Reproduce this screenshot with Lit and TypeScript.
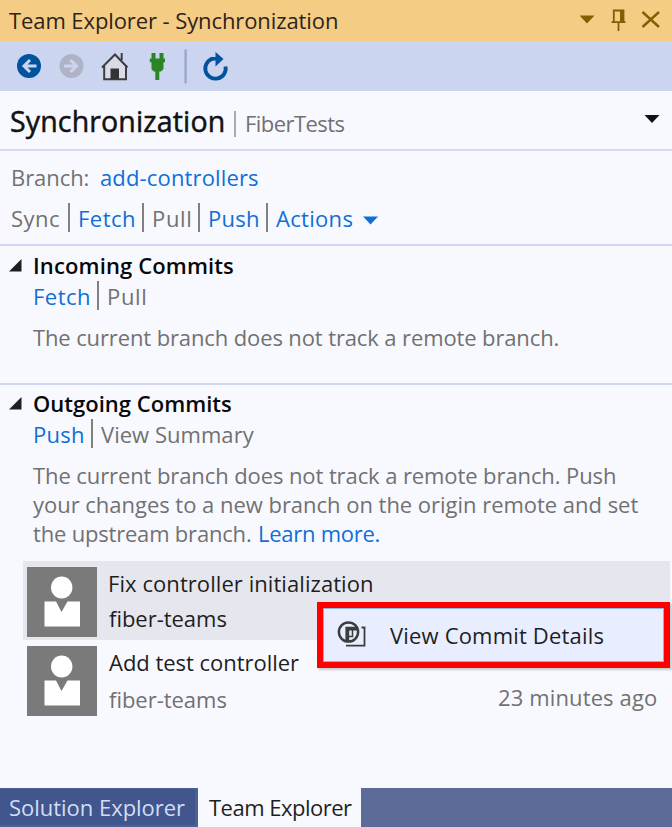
import { LitElement, html, css } from "lit";
import { customElement, property, state } from "lit/decorators.js";
import { styleMap } from "lit/directives/style-map.js";

const measure = document.createElement("canvas").getContext("2d")!;
const PRECISION = 16;

/** A single line label whose tracking is adjusted so its glyphs span `span` pixels. */
@customElement("fit-label")
class FitLabel extends LitElement {
  @property() text = "";
  @property({ type: Number }) span = 0;
  @state() private tracking = 0;
  @state() private bearing = 0;

  static styles = css`
    :host { display: block; flex: none; white-space: nowrap; }
    .label { display: block; white-space: pre; }
  `;

  firstUpdated() {
    const cs = getComputedStyle(this);
    measure.font = `${cs.fontWeight} ${parseFloat(cs.fontSize) * PRECISION}px ${cs.fontFamily}`;
    const m = measure.measureText(this.text);
    const ink = (m.actualBoundingBoxRight + m.actualBoundingBoxLeft) / PRECISION;
    const left = m.actualBoundingBoxLeft / PRECISION;
    this.tracking = (this.span - ink) / (this.text.length - 1);
    // Upright stems have a wide side bearing; keep one pixel of it.
    this.bearing = Math.ceil(left) + (left < -1.5 ? 1 : 0);
  }

  render() {
    return html`<span
      class="label"
      style=${styleMap({
        width: `${this.span}px`,
        letterSpacing: `${this.tracking.toFixed(3)}px`,
        textIndent: `${this.bearing}px`,
      })}
      >${this.text}</span>`;
  }
}

const label = (text: string, span: number, cls = "") =>
  html`<fit-label class=${cls} .text=${text} .span=${span}></fit-label>`;

const expander = html`<svg class="expander" width="13" height="13" viewBox="0 0 13 13"><path d="M12.5 0V12.5H0Z" fill="#1e1e1e" /></svg>`;

const avatar = html`<svg class="avatar" width="70" height="70" viewBox="0 0 70 70">
  <rect width="70" height="70" fill="#7a7a7a" />
  <ellipse cx="34.7" cy="20.5" rx="10.7" ry="11" fill="#fff" />
  <path d="M17.5 34.5H29L34.5 45L40.5 34.5H53V59.5H17.5Z" fill="#fff" />
</svg>`;

@customElement("app-root")
class AppRoot extends LitElement {
  static styles = css`
    :host {
      display: flex; flex-direction: column; position: relative;
      width: 672px; height: 827px; overflow: hidden; box-sizing: border-box;
      background: #f8f9ff; color: #717171;
      font: 400 22px/30px "Open Sans", "Noto Sans", sans-serif;
    }
    svg { display: block; flex: none; }
    .row { display: flex; height: 30px; }
    .link { color: #0e6fd8; }
    .dark { color: #1e1e1e; }
    .titlebar { display: flex; align-items: center; height: 41px; padding-left: 9px; background: #f5cc84; color: #2b241c; }
    .titlebar fit-label { margin-top: -1px; }
    .window { display: flex; margin-left: auto; }
    .toolbar { display: flex; align-items: center; height: 50px; background: #ccd5f0; }
    .heading { display: flex; align-items: center; height: 58px; padding-left: 11px; border-bottom: 2px solid #d3dbf2; }
    .page { font-size: 28.5px; color: #111; margin-top: 1px; -webkit-text-stroke: 0.5px #111; }
    .rule { width: 2px; height: 26px; margin: 7px 10px 0 11px; background: #aaa; }
    .project { margin-top: 5px; }
    .page-menu { margin: -3px 12px 0 auto; }
    .branch { height: 95px; border-bottom: 2px solid #cfd8f0; box-sizing: border-box; padding: 11px 0 0 12px; }
    .branch .row + .row { margin-top: 11px; }
    .bar { width: 2px; height: 29px; background: #808080; flex: none; }
    .section { box-sizing: border-box; padding-left: 34px; }
    .incoming { height: 139px; padding-top: 4px; border-bottom: 2px solid #cfd8f0; }
    .outgoing { height: 176px; padding-top: 3px; }
    .title { position: relative; color: #080808; font-weight: 600; }
    .expander { position: absolute; left: -25px; top: 9px; }
    .actions { margin-top: 1px; }
    .note { margin-top: 11px; margin-left: -1px; }
    .para .row { height: 29px; }
    .commit { display: flex; box-sizing: border-box; margin: 0 2px 0 23px; height: 79px; padding: 6px 0 0 4px; }
    .commit.selected { background: #e6e7ee; }
    .body { margin-left: 12px; flex: 1; }
    .body .row { margin-top: 1px; }
    .body .row + .row { margin-top: 5px; }
    .body .row + .late { margin-top: 7px; }
    .age { margin-left: auto; margin-right: 14px; margin-top: -2px; }
    .menu {
      position: absolute; left: 317px; top: 602px; width: 353px; height: 66px; box-sizing: border-box;
      display: flex; align-items: center; padding-left: 14px;
      border: 6px solid #f00; background: #e8eeff; box-shadow: inset 0 0 0 1px #8fb4dc, 2px 2px 2px #00000033;
    }
    .tabs { display: flex; margin-top: auto; height: 39px; background: #5d6b99; }
    .tab { box-sizing: border-box; height: 39px; padding: 4px 0 0 11px; }
    .idle { width: 198px; background: #40568d; color: #d3ddf5; border: solid #4d6096; border-width: 1px 3px 2px 0; padding: 3px 0 0 10px; }
    .active { width: 163px; background: #f8f9ff; color: #1e1e1e; }
    .g9 { margin-left: 9px; }
    .g10 { margin-left: 10px; }
    .g13 { margin-left: 13px; }
  `;

  private toolbar() {
    return html`<svg width="240" height="50" viewBox="0 41 240 50" fill="none">
      <circle cx="29" cy="66" r="12" fill="#00539c" />
      <path d="M36.5 66H24M30 60L24 66L30 72" stroke="#ccd5f0" stroke-width="3" />
      <circle cx="71.5" cy="66" r="12" fill="#afb3c5" />
      <path d="M64 66H76.5M70.5 60L76.5 66L70.5 72" stroke="#ccd5f0" stroke-width="3" />
      <path d="M104.5 65L115 55L126 65V79H104.5Z" fill="#dadbe8" />
      <path d="M102 67.5L115 54.5L127.5 67.5M104.2 65V79.2H126V65M121.7 60V53" stroke="#3d3d3d" stroke-width="2" />
      <path d="M110.5 68.5H119V79H110.5Z" fill="#333" />
      <path d="M151.5 53H155.5V58.5H159.5V53H163.5V58.5H165V62.3H163.5V69L161 71.5H159.3V80H155.3V71.5H153.5L151.5 69V62.3H149.8V58.5H151.5Z" fill="#2c8524" />
      <rect x="184.5" y="49.5" width="2.2" height="34" fill="#94a6ca" />
      <path d="M213 58.6A10.2 10.2 0 1 0 225.5 66.5" stroke="#00539c" stroke-width="3.8" />
      <path d="M215.5 52L223.5 59L215.5 66.5V60.5H210.5V57H215.5Z" fill="#00539c" />
    </svg>`;
  }

  private actions(items: [string, number, boolean, number, number][]) {
    return items.map(([text, span, enabled, before, after], i) => html`
      ${i ? html`<span class="bar" style=${styleMap({ marginLeft: `${before}px`, marginRight: `${after}px` })}></span>` : ""}
      ${label(text, span, enabled ? "link" : "")}`);
  }

  render() {
    return html`
      <div class="titlebar">
        ${label("Team Explorer - Synchronization", 328)}
        <svg class="window" width="92" height="41" viewBox="580 0 92 41" fill="none">
          <path d="M579.5 15.5H594.5L587 23.5Z" fill="#806000" />
          <path d="M613.8 22V10.5H623.5V22M611.5 22.2H625.5M618.5 22V31" stroke="#806000" stroke-width="1.8" />
          <path d="M620 10H624V22H620Z" fill="#806000" />
          <path d="M642.5 12L659 27M659 12L642.5 27" stroke="#806000" stroke-width="2.4" />
        </svg>
      </div>
      <div class="toolbar">${this.toolbar()}</div>
      <div class="heading">
        ${label("Synchronization", 212, "page")}
        <span class="rule"></span>
        ${label("FiberTests", 97, "project")}
        <svg class="page-menu" viewBox="0 0 16 8" width="16" height="8"><path d="M0.5 0H15.5L8 8Z" fill="#111" /></svg>
      </div>
      <div class="branch">
        <div class="row">${label("Branch:", 75)}<span class="g13"></span>${label("add-controllers", 157, "link")}</div>
        <div class="row">
          ${this.actions([
            ["Sync", 47, false, 0, 0],
            ["Fetch", 54, true, 9, 9],
            ["Pull", 36, false, 9, 9],
            ["Push", 48, true, 9, 9],
            ["Actions", 76, true, 9, 8],
          ])}
          <svg class="g10 link" width="16" height="30" viewBox="0 0 16 30"><path d="M1 13.5H16L8.5 21.5Z" fill="currentColor" /></svg>
        </div>
      </div>
      <div class="section incoming">
        <div class="row title">${expander}${label("Incoming Commits", 198)}</div>
        <div class="row actions">${this.actions([["Fetch", 54, true, 0, 0], ["Pull", 36, false, 9, 9]])}</div>
        <div class="row note">${label("The current branch does not track a remote branch.", 525)}</div>
      </div>
      <div class="section outgoing">
        <div class="row title">${expander}${label("Outgoing Commits", 197)}</div>
        <div class="row actions">${this.actions([["Push", 48, true, 0, 0], ["View Summary", 153, false, 9, 8]])}</div>
        <div class="note para">
          <div class="row">${label("The current branch does not track a remote branch. Push", 582)}</div>
          <div class="row">${label("your changes to a new branch on the origin remote and set", 605)}</div>
          <div class="row">${label("the upstream branch.", 217)}<span class="g9"></span>${label("Learn more.", 119, "link")}</div>
        </div>
      </div>
      <div class="commit selected dark">
        ${avatar}
        <div class="body">
          <div class="row">${label("Fix controller initialization", 262)}</div>
          <div class="row">${label("fiber-teams", 117)}</div>
        </div>
      </div>
      <div class="commit">
        ${avatar}
        <div class="body">
          <div class="row dark">${label("Add test controller", 190)}</div>
          <div class="row late">${label("fiber-teams", 117)}${label("23 minutes ago", 157, "age")}</div>
        </div>
      </div>
      <div class="menu dark">
        <svg width="53" height="54" viewBox="337 608 53 54" fill="none">
          <path d="M346 645.7H364.5V627.5H361.5" stroke="#3d3d3d" stroke-width="1.8" />
          <circle cx="348.5" cy="632" r="9.6" stroke="#3d3d3d" stroke-width="2.5" />
          <path d="M347.3 641.5V628.7H357" stroke="#3d3d3d" stroke-width="3.8" />
          <path d="M349 636.5H352.5V629" stroke="#3d3d3d" stroke-width="1.6" />
        </svg>
        ${label("View Commit Details", 213)}
      </div>
      <div class="tabs">
        <div class="tab idle">${label("Solution Explorer", 175)}</div>
        <div class="tab active">${label("Team Explorer", 143)}</div>
      </div>
    `;
  }
}
